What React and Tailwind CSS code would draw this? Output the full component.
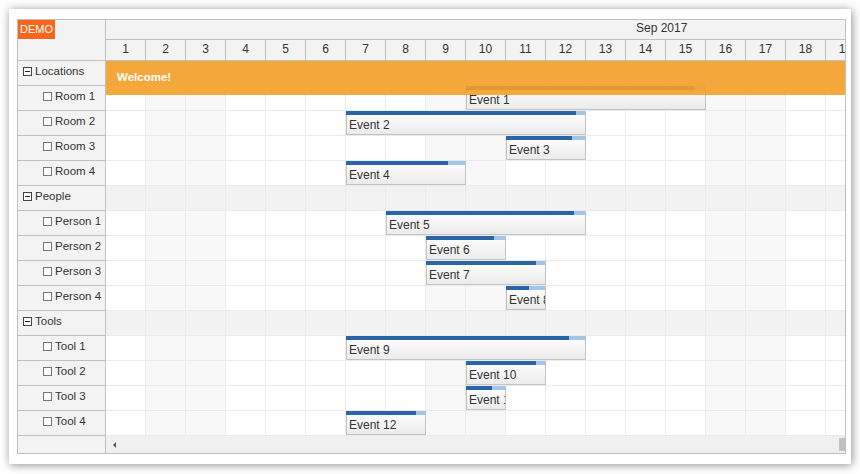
import React from "react";

const days = Array.from({ length: 30 }, (_, i) => i + 1);
const weekend = new Set([2, 3, 9, 10, 16, 17, 23, 24, 30]);

const rows = [
  { name: "Locations", parent: true },
  { name: "Room 1", ev: { s: 10, len: 6, text: "Event 1", done: 228 } },
  { name: "Room 2", ev: { s: 7, len: 6, text: "Event 2", done: 230 } },
  { name: "Room 3", ev: { s: 11, len: 2, text: "Event 3", done: 66 } },
  { name: "Room 4", ev: { s: 7, len: 3, text: "Event 4", done: 102 } },
  { name: "People", parent: true },
  { name: "Person 1", ev: { s: 8, len: 5, text: "Event 5", done: 188 } },
  { name: "Person 2", ev: { s: 9, len: 2, text: "Event 6", done: 68 } },
  { name: "Person 3", ev: { s: 9, len: 3, text: "Event 7", done: 110 } },
  { name: "Person 4", ev: { s: 11, len: 1, text: "Event 8", done: 23 } },
  { name: "Tools", parent: true },
  { name: "Tool 1", ev: { s: 7, len: 6, text: "Event 9", done: 223 } },
  { name: "Tool 2", ev: { s: 10, len: 2, text: "Event 10", done: 70 } },
  { name: "Tool 3", ev: { s: 10, len: 1, text: "Event 11", done: 26 } },
  { name: "Tool 4", ev: { s: 7, len: 2, text: "Event 12", done: 70 } },
];

function MinusBox() {
  return (
    <svg width="9" height="9" viewBox="0 0 9 9" className="shrink-0">
      <rect x="0.5" y="0.5" width="8" height="8" fill="#fff" stroke="#444" />
      <line x1="2" y1="4.5" x2="7" y2="4.5" stroke="#222" />
    </svg>
  );
}

function CheckBox() {
  return (
    <svg width="9" height="9" viewBox="0 0 9 9" className="shrink-0">
      <rect x="0.5" y="0.5" width="8" height="8" fill="#fff" stroke="#777" />
    </svg>
  );
}

function Event({ ev }) {
  return (
    <div
      className="absolute top-0 h-[24px] flex flex-col overflow-hidden z-10"
      style={{ left: (ev.s - 1) * 40, width: ev.len * 40 }}
    >
      <div className="h-[4px] shrink-0 bg-[#a4c6e6] flex">
        <div className="h-full bg-[#2a65a7]" style={{ width: ev.done }} />
      </div>
      <div className="flex-1 border-x border-b border-[#c3c3c3] bg-gradient-to-b from-[#fcfcfc] to-[#ebebeb] flex items-center pl-[2px] text-[12px] text-[#333] whitespace-nowrap overflow-hidden">
        {ev.text}
      </div>
    </div>
  );
}

export default function App() {
  return (
    <div
      className="w-[860px] h-[474px] bg-white pt-[9px] pl-[9px]"
      style={{ fontFamily: '"Liberation Sans", Arial, sans-serif' }}
    >
      <div className="w-[842px] h-[455px] bg-white shadow-[1px_1px_9px_rgba(0,0,0,0.45)] pt-[10px] pl-[8px]">
        <div className="w-[829px] border border-[#c0c0c0] flex text-[12px] text-[#333]">
          {/* row header */}
          <div className="w-[88px] shrink-0 border-r border-[#c0c0c0] flex flex-col bg-[#f3f3f3]">
            <div className="h-[41px] border-b border-[#c0c0c0] relative">
              <div className="absolute left-0 top-0 h-[19px] w-[37px] bg-[#f8661c] text-white text-[11px] flex items-center justify-center">
                DEMO
              </div>
            </div>
            {rows.map((r) => (
              <div
                key={r.name}
                className={
                  "h-[25px] border-b border-[#c0c0c0] flex items-center pb-[3px] gap-[3px] text-[11.5px] " +
                  (r.parent ? "pl-[5px]" : "pl-[25px]")
                }
              >
                {r.parent ? <MinusBox /> : <CheckBox />}
                <span className="whitespace-nowrap">{r.name}</span>
              </div>
            ))}
            <div className="h-[17px]" />
          </div>

          {/* grid */}
          <div className="w-[739px] shrink-0 overflow-hidden flex flex-col">
            <div className="h-[20px] border-b border-[#c0c0c0] bg-[#f3f3f3] flex items-center pb-[3px] pl-[530px] whitespace-nowrap">
              Sep 2017
            </div>
            <div className="h-[21px] border-b border-[#c0c0c0] bg-[#f3f3f3] flex">
              {days.map((d) => (
                <div
                  key={d}
                  className="w-[40px] shrink-0 border-r border-[#c0c0c0] flex items-center justify-center pb-[3px]"
                >
                  {d}
                </div>
              ))}
            </div>
            <div className="relative">
              {rows.map((r) => (
                <div key={r.name} className="relative h-[25px] flex">
                  {days.map((d) => (
                    <div
                      key={d}
                      className={
                        "w-[40px] h-[25px] shrink-0 border-r border-b border-[#ebebeb] " +
                        (r.parent
                          ? "bg-[#f2f2f2]"
                          : weekend.has(d)
                          ? "bg-[#f8f8f8]"
                          : "bg-white")
                      }
                    />
                  ))}
                  {r.ev && <Event ev={r.ev} />}
                </div>
              ))}
              <div className="absolute left-0 top-0 w-[739px] h-[34px] bg-[rgba(244,160,40,0.9)] z-20 flex items-center pl-[11px] text-white font-bold text-[11.5px]">
                Welcome!
              </div>
            </div>
            <div className="relative h-[17px] bg-[#f0f0f0]">
              <div className="absolute left-[7px] top-[6px] w-0 h-0 border-y-[3px] border-y-transparent border-r-[3px] border-r-[#555]" />
              <div className="absolute right-0 top-[2px] w-[6px] h-[13px] bg-[#c1c1c1]" />
            </div>
          </div>
        </div>
      </div>
    </div>
  );
}
